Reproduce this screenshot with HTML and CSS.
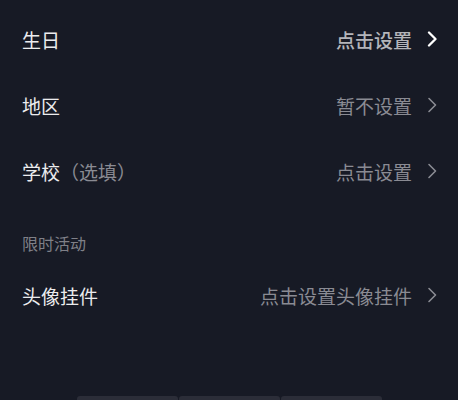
FILE: index.html
```html
<!DOCTYPE html>
<html lang="zh-CN">
<head>
  <meta charset="UTF-8">
  <title>编辑资料</title>
  <link rel="stylesheet" href="styles.css">
</head>
<body>
  <div class="page">
    <ul class="list">
      <li class="row">
        <span class="label">生日</span>
        <span class="value strong">点击设置</span>
        <svg class="arrow strong" viewBox="0 0 10 16"><polyline points="2,1.5 8.5,8 2,14.5"/></svg>
      </li>
      <li class="row">
        <span class="label">地区</span>
        <span class="value">暂不设置</span>
        <svg class="arrow" viewBox="0 0 10 16"><polyline points="2,1.5 8.5,8 2,14.5"/></svg>
      </li>
      <li class="row">
        <span class="label">学校<span class="hint">（选填）</span></span>
        <span class="value">点击设置</span>
        <svg class="arrow" viewBox="0 0 10 16"><polyline points="2,1.5 8.5,8 2,14.5"/></svg>
      </li>
    </ul>

    <div class="section-title">限时活动</div>
    <ul class="list">
      <li class="row short">
        <span class="label">头像挂件</span>
        <span class="value">点击设置头像挂件</span>
        <svg class="arrow" viewBox="0 0 10 16"><polyline points="2,1.5 8.5,8 2,14.5"/></svg>
      </li>
    </ul>

    <div class="tabs">
      <div class="tab"></div>
      <div class="tab"></div>
      <div class="tab"></div>
    </div>
  </div>
</body>
</html>
```

FILE: styles.css
```css
body {
  margin: 0;
  background-color: #171a25;
  font-family: "Noto Sans CJK SC", "Noto Sans", sans-serif;
  color: #ececee;
}
.page {
  height: 400px;
  display: flex;
  flex-direction: column;
  overflow: hidden;
}
.list {
  list-style: none;
  margin: 0;
  padding: 0;
}
.list:first-child {
  padding-top: 6px;
}
.row {
  display: flex;
  align-items: center;
  height: 66px;
  padding: 0 21px 0 22px;
  font-size: 19px;
}
.row.short {
  height: 54px;
}
.label {
  flex: 1;
  color: #ececee;
}
.hint {
  color: #8a8b93;
}
.value {
  color: #8a8b93;
}
.value.strong {
  color: #b4b5ba;
  font-weight: 500;
}
.arrow {
  width: 10px;
  height: 16px;
  margin-left: 15px;
  fill: none;
  stroke: #8a8b93;
  stroke-width: 1.6;
  stroke-linecap: round;
  stroke-linejoin: round;
}
.arrow.strong {
  stroke: #ffffff;
  stroke-width: 2.3;
}
.section-title {
  padding: 27px 22px 0;
  height: 37px;
  font-size: 16px;
  color: #7f8088;
}
.tabs {
  margin-top: auto;
  display: flex;
  justify-content: center;
  gap: 1px;
  height: 4px;
}
.tab {
  width: 101px;
  background-color: #2b2d38;
  border-radius: 3px 3px 0 0;
}
```
